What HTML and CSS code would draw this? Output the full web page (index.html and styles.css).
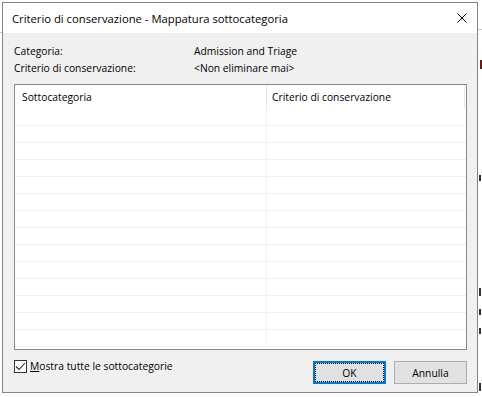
FILE: index.html
```html
<!DOCTYPE html>
<html lang="it">
<head>
<meta charset="utf-8">
<title>Criterio di conservazione - Mappatura sottocategoria</title>
<link rel="stylesheet" href="styles.css">
</head>
<body>
<div class="desktop">
  <div class="window">
    <div class="titlebar">
      <span class="title">Criterio di conservazione - Mappatura sottocategoria</span>
      <svg class="close" width="10" height="10" viewBox="0 0 10 10"><path d="M0.5 0.5 L9.5 9.5 M9.5 0.5 L0.5 9.5" stroke="#000" stroke-width="1" fill="none"/></svg>
    </div>
    <div class="content">
      <div class="info">
        <div class="info-row"><span class="lbl">Categoria:</span><span class="val">Admission and Triage</span></div>
        <div class="info-row"><span class="lbl">Criterio di conservazione:</span><span class="val">&lt;Non eliminare mai&gt;</span></div>
      </div>
      <div class="list">
        <div class="list-header">
          <div class="hcol c1">Sottocategoria</div>
          <div class="hcol c2">Criterio di conservazione</div>
        </div>
        <div class="rows">
          <div class="row"><div class="cell c1"></div><div class="cell c2"></div></div>
          <div class="row"><div class="cell c1"></div><div class="cell c2"></div></div>
          <div class="row"><div class="cell c1"></div><div class="cell c2"></div></div>
          <div class="row"><div class="cell c1"></div><div class="cell c2"></div></div>
          <div class="row"><div class="cell c1"></div><div class="cell c2"></div></div>
          <div class="row"><div class="cell c1"></div><div class="cell c2"></div></div>
          <div class="row"><div class="cell c1"></div><div class="cell c2"></div></div>
          <div class="row"><div class="cell c1"></div><div class="cell c2"></div></div>
          <div class="row"><div class="cell c1"></div><div class="cell c2"></div></div>
          <div class="row"><div class="cell c1"></div><div class="cell c2"></div></div>
          <div class="row"><div class="cell c1"></div><div class="cell c2"></div></div>
          <div class="row"><div class="cell c1"></div><div class="cell c2"></div></div>
          <div class="row"><div class="cell c1"></div><div class="cell c2"></div></div>
          <div class="row"><div class="cell c1"></div><div class="cell c2"></div></div>
        </div>
      </div>
      <div class="footer">
        <label class="check">
          <span class="box"><svg width="11" height="11" viewBox="0 0 11 11"><path d="M1 5.5 L4 8.5 L10 2" stroke="#222" stroke-width="1.1" fill="none"/></svg></span>
          <span class="check-label"><u>M</u>ostra tutte le sottocategorie</span>
        </label>
        <div class="buttons">
          <button class="btn btn-default">OK</button>
          <button class="btn">Annulla</button>
        </div>
      </div>
    </div>
  </div>
  <span class="mark m1"></span>
  <span class="mark m2"></span>
  <span class="mark m3"></span>
  <span class="mark g1"></span>
  <span class="mark g2"></span>
  <span class="mark g3"></span>
  <span class="mark g4"></span>
  <span class="mark g5"></span>
</div>
</body>
</html>
```
FILE: styles.css
```css
html, body {
  margin: 0;
  width: 482px;
  height: 397px;
  overflow: hidden;
  background: #fff;
}
body {
  font-family: "Open Sans", "Noto Sans", sans-serif;
  font-size: 10.3px;
  color: #000;
}
.desktop {
  position: relative;
  width: 482px;
  height: 397px;
  padding: 2px 0 0 2px;
  box-sizing: border-box;
}
.window {
  position: relative;
  z-index: 1;
  width: 476px;
  height: 391px;
  box-sizing: border-box;
  border: 1px solid #858585;
  display: flex;
  flex-direction: column;
  background: #f0f0f0;
}
.titlebar {
  height: 30px;
  flex: none;
  background: #fff;
  display: flex;
  align-items: center;
  padding-left: 9px;
}
.title {
  flex: 1;
  font-size: 11.25px;
  white-space: nowrap;
}
.close {
  flex: none;
  margin-right: 10px;
}
.content {
  flex: 1;
  padding: 10px 10px 0 11px;
  display: flex;
  flex-direction: column;
}
.info-row {
  display: flex;
  height: 17px;
  line-height: 17px;
}
.lbl {
  width: 180px;
  flex: none;
}
.list {
  margin-top: 7px;
  height: 266px;
  box-sizing: border-box;
  border: 1px solid #828790;
  background: #fff;
  overflow: hidden;
}
.list-header {
  display: flex;
  height: 24px;
}
.hcol {
  box-sizing: border-box;
  line-height: 24px;
  border-right: 1px solid #e5e5e5;
  white-space: nowrap;
}
.hcol.c1 {
  width: 252px;
  padding-left: 7px;
}
.hcol.c2 {
  width: 198px;
  padding-left: 5px;
}
.row {
  display: flex;
  height: 17px;
  box-sizing: border-box;
  border-bottom: 1px solid #f0f0f0;
}
.cell.c1 {
  width: 252px;
  box-sizing: border-box;
  border-right: 1px solid #f0f0f0;
}
.cell.c2 {
  flex: 1;
}
.footer {
  margin-top: 11px;
  display: flex;
  justify-content: space-between;
  align-items: flex-start;
  height: 23px;
}
.check {
  display: flex;
  align-items: center;
  margin-top: -1px;
  height: 13px;
}
.box {
  width: 13px;
  height: 13px;
  box-sizing: border-box;
  border: 1px solid #333;
  background: #fff;
  display: flex;
}
.check-label {
  margin-left: 3px;
  line-height: 13px;
  white-space: nowrap;
}
.buttons {
  display: flex;
  gap: 8px;
}
.btn {
  width: 73px;
  height: 23px;
  box-sizing: border-box;
  margin: 0;
  padding: 0;
  font-family: inherit;
  font-size: 10.3px;
  color: #000;
  background: #e1e1e1;
  border: 1px solid #adadad;
  border-radius: 0;
}
.btn-default {
  border: 2px solid #0078d7;
  outline: 1px dotted #000;
  outline-offset: -3px;
}
.mark {
  position: absolute;
  background: #c8c8c8;
}
.m1 { left: 0; top: 32px; width: 2px; height: 1px; }
.m2 { left: 478px; top: 29px; width: 4px; height: 1px; }
.m3 { left: 480px; top: 60px; width: 2px; height: 9px; background: #6b1a1a; }
.g1 { left: 479px; top: 175px; width: 2px; height: 6px; background: #333; }
.g2 { left: 479px; top: 288px; width: 2px; height: 8px; background: #333; }
.g3 { left: 479px; top: 309px; width: 2px; height: 6px; background: #333; }
.g4 { left: 479px; top: 328px; width: 2px; height: 6px; background: #333; }
.g5 { left: 479px; top: 383px; width: 2px; height: 8px; background: #333; }
```
